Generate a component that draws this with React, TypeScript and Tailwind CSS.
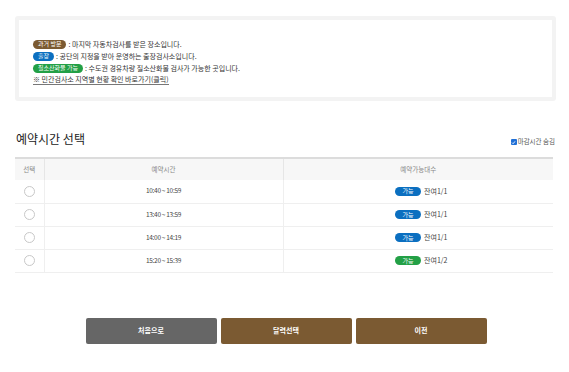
const slots = [
  { time: '10:40 ~ 10:59', left: '잔여1/1', color: 'bg-[#0b6fc0]' },
  { time: '13:40 ~ 13:59', left: '잔여1/1', color: 'bg-[#0b6fc0]' },
  { time: '14:00 ~ 14:19', left: '잔여1/1', color: 'bg-[#0b6fc0]' },
  { time: '15:20 ~ 15:39', left: '잔여1/2', color: 'bg-[#23a046]' },
]

function Badge({ label, color }: { label: string; color: string }) {
  return (
    <span
      className={`${color} inline-flex items-center h-[9px] px-[5px] rounded-full text-white text-[6px] leading-none mr-[2px]`}
    >
      {label}
    </span>
  )
}

export default function App() {
  return (
    <div className="w-[569px] h-[372px] bg-white text-[#333] font-['Noto_Sans_CJK_KR','Noto_Sans',sans-serif]">
      <div className="pt-4 pl-[15px] pr-[13px]">
        {/* legend box */}
        <div className="h-[85px] border-4 border-[#f3f3f3] rounded-[3px] pt-[18px] pl-[14px]">
          <div className="flex items-center h-3 text-[7px]">
            <Badge label="과거 방문" color="bg-[#7b5a32]" />
            <span>: 마지막 자동차검사를 받은 장소입니다.</span>
          </div>
          <div className="flex items-center h-3 text-[7px]">
            <Badge label="출장" color="bg-[#0b6fc0]" />
            <span>: 공단의 지정을 받아 운영하는 출장검사소입니다.</span>
          </div>
          <div className="flex items-center h-3 text-[7px]">
            <Badge label="질소산화물 가능" color="bg-[#23a046]" />
            <span>: 수도권 경유차량 질소산화물 검사가 가능한 곳입니다.</span>
          </div>
          <div className="flex items-center h-3 text-[7px]">
            <span className="border-b border-[#777] leading-[9px]">
              ※ 민간검사소 지역별 현황 확인 바로가기(클릭)
            </span>
          </div>
        </div>

        {/* title row */}
        <div className="flex items-end justify-between mt-[29px] pr-[1px]">
          <h2 className="text-[12px] leading-[18px] text-[#222] pl-px">예약시간 선택</h2>
          <label className="flex items-center gap-[1px] text-[6.5px] text-[#555] mb-[1px]">
            <span className="w-[6px] h-[6px] bg-[#1f6fd6] rounded-[1px] flex items-center justify-center">
              <svg viewBox="0 0 10 10" className="w-[5px] h-[5px]">
                <path d="M2 5.2 4.2 7.4 8 2.8" stroke="white" strokeWidth="1.8" fill="none" />
              </svg>
            </span>
            마감시간 숨김
          </label>
        </div>

        {/* table */}
        <table className="w-[538px] mt-[9px] border-t-2 border-[#dcdcdc] border-collapse text-[6.5px]">
          <thead>
            <tr className="h-[22px] bg-[#f7f7f7] text-[#888]">
              <th className="w-[29px] font-normal border-r border-[#e6e6e6]">선택</th>
              <th className="w-[239px] font-normal border-r border-[#e6e6e6]">예약시간</th>
              <th className="font-normal">예약가능대수</th>
            </tr>
          </thead>
          <tbody>
            {slots.map((s) => (
              <tr key={s.time} className="h-[23px] border-b border-[#efefef]">
                <td className="border-r border-[#efefef]">
                  <div className="mx-auto w-[11px] h-[11px] rounded-full border border-[#c8c8c8]" />
                </td>
                <td className="text-center text-[#444] border-r border-[#efefef] tracking-[-0.3px]">
                  {s.time}
                </td>
                <td className="text-center">
                  <span className="inline-flex items-center pl-[6px]">
                    <span
                      className={`${s.color} inline-flex items-center justify-center w-[26px] h-[9px] rounded-full text-white text-[6px] leading-none mr-[3px]`}
                    >
                      가능
                    </span>
                    <span className="text-[#444] text-[7px]">{s.left}</span>
                  </span>
                </td>
              </tr>
            ))}
          </tbody>
        </table>
      </div>

      {/* buttons */}
      <div className="flex justify-center gap-[4px] mt-[45px] pl-[3px]">
        <button className="w-[131px] h-[26px] bg-[#666666] rounded-[2px] text-white text-[7px] font-semibold">
          처음으로
        </button>
        <button className="w-[131px] h-[26px] bg-[#7b5a32] rounded-[2px] text-white text-[7px] font-semibold">
          달력선택
        </button>
        <button className="w-[131px] h-[26px] bg-[#7b5a32] rounded-[2px] text-white text-[7px] font-semibold">
          이전
        </button>
      </div>
    </div>
  )
}
